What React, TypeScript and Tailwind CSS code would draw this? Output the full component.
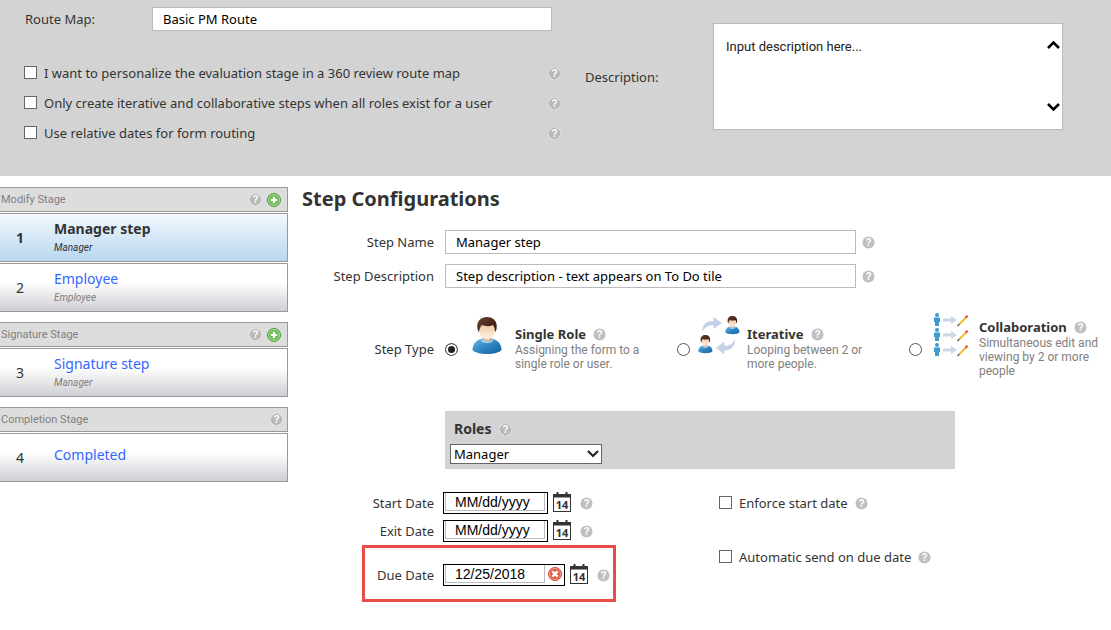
import React, { useState } from 'react';

type HelpProps = { ring?: boolean };

const HelpIcon = ({ ring = false }: HelpProps) => (
  <svg width="13" height="13" viewBox="0 0 13 13" className="shrink-0" role="img" aria-label="Help">
    {ring && <circle cx="6.5" cy="6.5" r="6" fill="none" stroke="#f0f0f0" strokeWidth="1" strokeDasharray="6.4 3.025" strokeDashoffset="-1.5" />}
    <circle cx="6.5" cy="6.5" r={ring ? 5.7 : 6} fill={ring ? '#b9b9b9' : '#bfbfbf'} />
    <text x="6.5" y="10" textAnchor="middle" fontSize="10" fontWeight="700" fill="#fff" className="font-['Liberation_Sans',sans-serif]">
      ?
    </text>
  </svg>
);

const AddIcon = () => (
  <svg width="14" height="14" viewBox="0 0 14 14" className="block">
    <circle cx="7" cy="7" r="6.5" fill="#6abf55" stroke="#4c9a3e" />
    <circle cx="7" cy="7" r="5.5" fill="none" stroke="#b9e3a8" strokeWidth="0.8" />
    <path d="M7 3.8v6.4M3.8 7h6.4" stroke="#fff" strokeWidth="2.2" />
  </svg>
);

const ClearIcon = () => (
  <svg width="14" height="14" viewBox="0 0 14 14" className="block">
    <circle cx="7" cy="7" r="6.5" fill="#e0583f" stroke="#cc4a35" />
    <circle cx="7" cy="7" r="5.5" fill="none" stroke="#f3b5a5" strokeWidth="0.8" />
    <path d="M4.4 4.4l5.2 5.2M9.6 4.4l-5.2 5.2" stroke="#fff" strokeWidth="2.4" />
  </svg>
);

const CalendarIcon = () => (
  <svg width="18" height="20" viewBox="0 0 18 20" className="block">
    <rect x="0.5" y="2.5" width="17" height="17" fill="#fff" stroke="#333" />
    <path d="M0 2h18v3.5H0z" fill="#333" />
    <path d="M4.5 0v3M13.5 0v3" stroke="#333" strokeWidth="2" />
    <text x="9" y="17" textAnchor="middle" fontSize="11" fontWeight="700" fill="#333" className="font-['Noto_Sans',sans-serif]">
      14
    </text>
  </svg>
);

// Bust drawn in a 30x37 box, reused at a smaller scale for the iterative icon
const Person = () => (
  <g>
    <path d="M0.5 33c0-7 5-10.5 10-11.5h9c5 1 10 4.5 10 11.5-2 2.5-8 4-14.5 4s-12.5-1.5-14.5-4z" fill="url(#shirt)" />
    <path d="M11 19h8v3.5c-1 2.5-7 2.5-8 0z" fill="#f0bd95" />
    <path d="M9.5 22c2 3.5 9 3.5 11 0l1 1c-2 4-11 4-13 0z" fill="#b5dcf2" />
    <ellipse cx="15" cy="13" rx="8" ry="9" fill="url(#skin)" />
    <path d="M5.5 12C4 4 9 0 15 0s11 4 9.5 12c-.3 1.5-1 2.5-1.5 3 0-3-.5-5-2-7-4 2-8 1-11 0-2 2-2.5 4-3 7-.6-.5-1.2-1.5-1.5-3z" fill="url(#hair)" />
  </g>
);

const PersonDefs = () => (
  <defs>
    <linearGradient id="shirt" x1="0" y1="0" x2="1" y2="1">
      <stop offset="0" stopColor="#6bb7e2" />
      <stop offset="0.5" stopColor="#2f86c4" />
      <stop offset="1" stopColor="#12609f" />
    </linearGradient>
    <linearGradient id="skin" x1="0" y1="0" x2="0" y2="1">
      <stop offset="0" stopColor="#f0bd95" />
      <stop offset="1" stopColor="#fdf0e2" />
    </linearGradient>
    <linearGradient id="hair" x1="0" y1="0" x2="1" y2="1">
      <stop offset="0" stopColor="#6a4130" />
      <stop offset="1" stopColor="#2e1710" />
    </linearGradient>
  </defs>
);

const SingleIcon = () => (
  <svg width="30" height="37" viewBox="0 0 30 37">
    <PersonDefs />
    <Person />
  </svg>
);

const IterativeIcon = () => (
  <svg width="42" height="39" viewBox="0 0 42 39">
    <g transform="translate(27 0) scale(.49)">
      <Person />
    </g>
    <g transform="translate(0 19) scale(.49)">
      <Person />
    </g>
    <path d="M4 16C4 8 9 5 15.500 5V1l8.500 6-8.500 6V9C11 9 7 11 4 16z" fill="#c3d2e8" />
    <path d="M37 23c.5 8-5 11.500-10.500 11.500v4L18 32l8.500-6.500V30c5 0 8-2 10.500-7z" fill="#c3d2e8" />
  </svg>
);

const CollaborationIcon = () => (
  <svg width="36" height="44" viewBox="0 0 36 44">
    {[0, 15, 30].map((y) => (
      <g key={y} transform={`translate(0 ${y})`}>
        <circle cx="4" cy="2" r="2" fill="#3d9bd0" />
        <path d="M1 4.5h6v4.5H6v4H2v-4H1z" fill="#3d9bd0" />
        <path d="M10 5.5h8V3l6 4-6 4V8.500h-8z" fill="#cbd8e9" />
        <path d="M26.500 11l6.500-6.500" stroke="#f0bd2c" strokeWidth="1.9" />
        <path d="M32.500 4.800l2-2" stroke="#e5523f" strokeWidth="2.3" />
        <path d="M24.500 13l2-2" stroke="#66502c" strokeWidth="1.2" />
      </g>
    ))}
  </svg>
);

const checkClass = 'appearance-none shrink-0 mb-0.5 w-[13px] h-[13px] border border-[#666] bg-white checked:bg-[#555]';

const personalizeOptions = [
  'I want to personalize the evaluation stage in a 360 review route map',
  'Only create iterative and collaborative steps when all roles exist for a user',
  'Use relative dates for form routing',
];

const RouteHeader = () => (
  <header className="flex h-44 bg-[#d3d3d3]">
    <div className="w-[567px] shrink-0 pt-[7px] pl-6">
      <div className="flex items-center">
        <label htmlFor="route" className="w-32 pl-px">Route Map:</label>
        <input id="route" defaultValue="Basic PM Route" className="h-6 w-[400px] border border-[#bbb] bg-white px-2.5 text-black" />
      </div>
      <div className="mt-[27px]">
        {personalizeOptions.map((text) => (
          <div key={text} className="flex h-[30px] items-center justify-between pr-1.5">
            <label className="flex items-center gap-[7px]">
              <input type="checkbox" className={checkClass} />
              {text}
            </label>
            <HelpIcon ring />
          </div>
        ))}
      </div>
    </div>
    <div className="mt-[23px] mr-12 ml-[18px] flex h-[107px] flex-1 items-center">
      <label htmlFor="description" className="w-32 shrink-0">Description:</label>
      <div className="relative h-full flex-1">
        <textarea
          id="description"
          defaultValue="Input description here..."
          className="block h-full w-full resize-none overflow-hidden border border-[#bbb] bg-white px-3 py-[13px] font-['Roboto',sans-serif] text-[#222]"
        />
        <svg width="13" height="72" viewBox="0 0 13 72" className="absolute top-[17px] right-[3px]">
          <path d="M1 8l5.500-5.500L12 8M1 64l5.500 5.500L12 64" fill="none" stroke="#000" strokeWidth="2.6" />
        </svg>
      </div>
    </div>
  </header>
);

type Step = { num: number; title: string; role?: string };
type Stage = { name: string; canAdd: boolean; steps: Step[] };

const stages: Stage[] = [
  {
    name: 'Modify Stage',
    canAdd: true,
    steps: [
      { num: 1, title: 'Manager step', role: 'Manager' },
      { num: 2, title: 'Employee', role: 'Employee' },
    ],
  },
  { name: 'Signature Stage', canAdd: true, steps: [{ num: 3, title: 'Signature step', role: 'Manager' }] },
  { name: 'Completion Stage', canAdd: false, steps: [{ num: 4, title: 'Completed' }] },
];

const Sidebar = () => (
  <aside className="flex w-72 shrink-0 flex-col gap-2.5">
    {stages.map((stage) => (
      <section key={stage.name} className="flex flex-col gap-px">
        <div className={`flex h-[25px] items-center border-y border-r border-[#999] bg-[#ddd] pl-px ${stage.canAdd ? 'pr-1.5' : 'pr-1'}`}>
          <h2 className="flex-1 font-['Roboto',sans-serif] text-[11px] text-[#808080]">{stage.name}</h2>
          <div className="flex items-center gap-[5px]">
            <HelpIcon ring />
            {stage.canAdd && (
              <button type="button" aria-label={`Add step to ${stage.name}`}>
                <AddIcon />
              </button>
            )}
          </div>
        </div>
        {stage.steps.map((step) => {
          const active = step.num === 1;
          return (
            <div
              key={step.num}
              className={`flex h-[49px] items-center border-y border-r border-[#999] bg-linear-to-b ${
                active ? 'from-[#f3f8fe] to-[#b8d7ef]' : 'from-white from-40% to-[#cfced4]'
              }`}
            >
              <span className={`w-[54px] pl-4 text-[14px] ${active ? 'font-bold' : ''}`}>{step.num}</span>
              <div className={step.role ? 'pb-0.5' : 'pb-1.5'}>
                <a href="#step" className={`block text-[14px] leading-5 ${active ? 'font-bold text-[#333]' : 'text-[#36f]'}`}>
                  {step.title}
                </a>
                {step.role && (
                  <p className={`pt-0.5 font-['Roboto',sans-serif] text-[10px] leading-[14px] italic ${active ? 'text-[#333]' : 'text-[#808080]'}`}>
                    {step.role}
                  </p>
                )}
              </div>
            </div>
          );
        })}
      </section>
    ))}
  </aside>
);

type TextRowProps = { id: string; label: string; value: string };

const TextRow = ({ id, label, value }: TextRowProps) => (
  <div className="flex items-center">
    <label htmlFor={id} className="w-[132px] text-right">{label}</label>
    <input id={id} defaultValue={value} className="mr-1.5 ml-[11px] h-6 w-[411px] border border-[#bbb] px-2.5 text-black" />
    <HelpIcon />
  </div>
);

const stepTypes = [
  { id: 'single', title: 'Single Role', text: 'Assigning the form to a single role or user.', icon: <SingleIcon /> },
  { id: 'iterative', title: 'Iterative', text: 'Looping between 2 or more people.', icon: <IterativeIcon /> },
  { id: 'collaboration', title: 'Collaboration', text: 'Simultaneous edit and viewing by 2 or more people', icon: <CollaborationIcon /> },
];

type DateRowProps = { id: string; label: string; value?: string; clearable?: boolean };

const DateRow = ({ id, label, value, clearable = false }: DateRowProps) => (
  <div className="flex h-7 items-center">
    <label htmlFor={id} className="w-[69px] text-right">{label}</label>
    <div className="mr-[5px] ml-[9px] flex h-[22px] items-center border border-black bg-white pr-0.5 pb-0.5 pl-px">
      <input
        id={id}
        defaultValue={value}
        placeholder="MM/dd/yyyy"
        className="h-[18px] w-[100px] border border-t-0 border-[#bbb] px-[9px] font-['Liberation_Sans',sans-serif] text-sm text-black outline-none placeholder:text-black"
      />
      {clearable && (
        <button type="button" aria-label="Clear date" className="ml-[3px]">
          <ClearIcon />
        </button>
      )}
    </div>
    <button type="button" aria-label="Open calendar" className="mr-[9px] mb-0.5">
      <CalendarIcon />
    </button>
    <HelpIcon />
  </div>
);

const CheckRow = ({ label }: { label: string }) => (
  <div className="flex items-center gap-[7px]">
    <label className="flex items-center gap-[7px]">
      <input type="checkbox" className={checkClass} />
      {label}
    </label>
    <HelpIcon />
  </div>
);

const StepConfigurations = () => {
  const [type, setType] = useState('single');

  return (
    <main className="ml-3.5 min-w-0 flex-1">
      <h1 className="text-[20px] leading-6 font-bold">Step Configurations</h1>

      <div className="mt-[19px] flex flex-col gap-2.5">
        <TextRow id="step-name" label="Step Name" value="Manager step" />
        <TextRow id="step-description" label="Step Description" value="Step description - text appears on To Do tile" />
      </div>

      <div className="mt-7 flex h-[66px] items-center">
        <span id="type-label" className="w-[132px] shrink-0 text-right">Step Type</span>
        <div role="radiogroup" aria-labelledby="type-label" className="ml-[11px] flex">
          {stepTypes.map((item) => (
            <div key={item.id} className="flex w-[232px] shrink-0 items-center">
              <input
                type="radio"
                id={item.id}
                name="step-type"
                checked={type === item.id}
                onChange={() => setType(item.id)}
                className="h-[13px] w-[13px] shrink-0 appearance-none rounded-full border border-[#555] bg-white checked:bg-[#222] checked:shadow-[inset_0_0_0_2px_#fff]"
              />
              <span className="flex w-[57px] shrink-0 justify-center pb-7">{item.icon}</span>
              <div className="w-[133px] pb-0.5">
                <div className="flex items-center gap-[7px] leading-[18px]">
                  <label htmlFor={item.id} className="font-bold">{item.title}</label>
                  <HelpIcon />
                </div>
                <p className="font-['Roboto',sans-serif] text-xs leading-[14px] text-[#808080]">{item.text}</p>
              </div>
            </div>
          ))}
        </div>
      </div>

      <section className="mt-[29px] ml-[143px] h-[58px] w-[510px] bg-[#d3d3d3] pt-2 pl-[5px]">
        <div className="flex items-center gap-[7px] pl-1">
          <label htmlFor="roles" className="text-[14px] leading-5 font-bold">Roles</label>
          <HelpIcon ring />
        </div>
        <div className="relative mt-[5px] w-[152px]">
          <select id="roles" className="block h-5 w-full appearance-none border border-[#666] bg-white pl-[3px] leading-4 text-black">
            <option>Manager</option>
            <option>Employee</option>
          </select>
          <svg width="12" height="8" viewBox="0 0 12 8" className="pointer-events-none absolute top-1.5 right-[3px]">
            <path d="M1 1l5 5 5-5" fill="none" stroke="#222" strokeWidth="2.2" />
          </svg>
        </div>
      </section>

      <div className="mt-5 ml-[60px] flex gap-[103px]">
        <div className="w-[254px]">
          <div className="pl-[3px]">
            <DateRow id="start" label="Start Date" />
            <DateRow id="exit" label="Exit Date" />
          </div>
          <div className="h-[57px] border-[3px] border-[#e94b46] pt-[13px]">
            <DateRow id="due" label="Due Date" value="12/25/2018" clearable />
          </div>
        </div>
        <div className="flex flex-col gap-[34px] pt-1">
          <CheckRow label="Enforce start date" />
          <CheckRow label="Automatic send on due date" />
        </div>
      </div>
    </main>
  );
};

export default function App() {
  return (
    <div className="bg-white font-['Noto_Sans',sans-serif] text-[13px] leading-5 text-[#333]">
      <RouteHeader />
      <div className="flex pt-[11px]">
        <Sidebar />
        <StepConfigurations />
      </div>
    </div>
  );
}
